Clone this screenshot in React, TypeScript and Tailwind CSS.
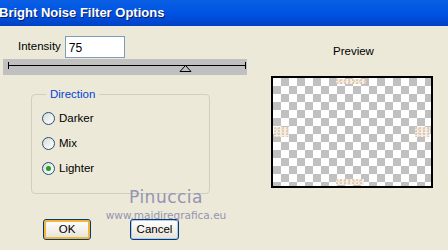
import React from "react";

const font = { fontFamily: '"Liberation Sans", Arial, sans-serif' };

function Radio({ label, checked }: { label: string; checked?: boolean }) {
  return (
    <div className="flex h-[13px] items-center gap-[4px]">
      <div className="flex h-[13px] w-[13px] items-center justify-center rounded-full border border-[#1c5180] bg-gradient-to-br from-[#dcdcd4] to-white">
        {checked && <div className="h-[5px] w-[5px] rounded-full bg-[#21a121]" />}
      </div>
      <span className="text-[11.5px] leading-none text-black">{label}</span>
    </div>
  );
}

function Checker() {
  const cells = [];
  for (let r = 0; r < 14; r++) {
    for (let c = 0; c < 20; c++) {
      const gray = (r + c) % 2 === 1;
      cells.push(<div key={`${r}-${c}`} className={gray ? "bg-[#c0c0c0]" : "bg-white"} />);
    }
  }
  return (
    <div className="grid h-full w-full grid-cols-[repeat(20,8px)] grid-rows-[repeat(14,8px)] overflow-hidden">
      {cells}
    </div>
  );
}

function Speck({ className }: { className: string }) {
  // beige noise patches at the edges of the preview
  return (
    <div
      className={`absolute bg-[#f6eee4] ${className}`}
      style={{
        backgroundImage:
          "radial-gradient(circle at 30% 40%, #dccab2 0.8px, transparent 1.3px), radial-gradient(circle at 70% 60%, #e6d5bf 0.8px, transparent 1.3px)",
        backgroundSize: "4px 3px, 5px 4px",
      }}
    />
  );
}

export default function App() {
  return (
    <div className="relative h-[250px] w-[448px] overflow-hidden bg-[#ece9d8]" style={font}>
      {/* title bar */}
      <div className="flex h-[26px] items-center bg-gradient-to-b from-[#0a5fe4] via-[#0054e3] to-[#0041c6]">
        <span
          className="-ml-[1px] text-[13px] font-bold text-white"
          style={{ textShadow: "1px 1px 0 #0a1e6e" }}
        >
          Bright Noise Filter Options
        </span>
      </div>

      <div className="flex">
        {/* left column */}
        <div className="w-[260px]">
          <div className="mt-[10px] flex items-center">
            <span className="ml-[18px] text-[11.5px] text-black">Intensity</span>
            <div className="ml-[4px] flex h-[22px] w-[60px] items-start border border-[#7f9db9] bg-white pl-[3px] pt-[2px] text-[12px] text-black">
              75
            </div>
          </div>

          {/* slider */}
          <div className="relative mt-[1px] ml-[3px] h-[16px] w-[244px] bg-[#c0c0c0]">
            <div className="absolute left-[5px] top-[6px] h-[1px] w-[238px] bg-black" />
            <div className="absolute left-[5px] top-[3px] h-[7px] w-[1px] bg-black" />
            <div className="absolute left-[242px] top-[3px] h-[7px] w-[1px] bg-black" />
            <svg className="absolute left-[176px] top-[6px]" width="13" height="8" viewBox="0 0 13 8">
              <path d="M6.5 0.5 L12 6.5 L1 6.5 Z" fill="#c0c0c0" stroke="black" strokeWidth="1" />
            </svg>
          </div>

          {/* direction group */}
          <fieldset className="ml-[31px] mt-[13px] h-[106px] w-[179px] rounded-[4px] border border-[#d0d0bf] px-[10px]">
            <legend className="ml-[4px] px-[4px] text-[11.5px] leading-[13px] text-[#0046d5]">Direction</legend>
            <div className="mt-[11px] flex flex-col gap-[12px]">
              <Radio label="Darker" />
              <Radio label="Mix" />
              <Radio label="Lighter" checked />
            </div>
          </fieldset>

          {/* buttons */}
          <div className="ml-[43px] mt-[25px] flex gap-[39px]">
            <button className="flex h-[21px] w-[48px] items-center justify-center rounded-[3px] border border-[#003c74] bg-gradient-to-b from-white to-[#e6e3d6] text-[11.5px] text-black shadow-[inset_0_0_0_2px_#f4b53d]">
              OK
            </button>
            <button className="flex h-[21px] w-[49px] items-center justify-center rounded-[3px] border border-[#003c74] bg-gradient-to-b from-white to-[#e6e3d6] text-[11.5px] text-black shadow-[inset_0_0_0_1px_#b4c8f0]">
              Cancel
            </button>
          </div>
        </div>

        {/* preview */}
        <div className="ml-[11px] flex flex-col">
          <div className="mt-[17px] ml-[62px] text-[11.5px] text-black">Preview</div>
          <div className="relative mt-[16px] h-[112px] w-[162px] border-2 border-black bg-white">
            <Checker />
            <Speck className="left-[63px] top-[1px] h-[5px] w-[30px]" />
            <Speck className="left-[1px] top-[49px] h-[10px] w-[15px]" />
            <Speck className="right-[1px] top-[49px] h-[10px] w-[15px]" />
            <Speck className="left-[63px] bottom-[1px] h-[6px] w-[28px]" />
          </div>
        </div>
      </div>

      {/* watermark */}
      <div className="pointer-events-none absolute left-[104px] top-[189px] flex w-[124px] flex-col items-center leading-none text-[#9494b4]">
        <span className="text-[17px] tracking-[0.5px]" style={{ fontFamily: '"DejaVu Sans", sans-serif' }}>
          Pinuccia
        </span>
        <span className="mt-[4px] text-[10.5px]" style={{ fontFamily: '"DejaVu Sans", sans-serif' }}>
          www.maidiregrafica.eu
        </span>
      </div>
    </div>
  );
}
